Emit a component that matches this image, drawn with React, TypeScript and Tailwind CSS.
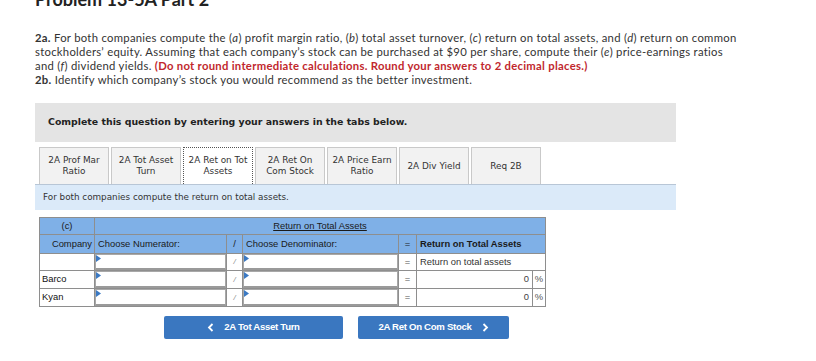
import React from 'react';

const tabs = [
  ['2A Prof Mar', 'Ratio'],
  ['2A Tot Asset', 'Turn'],
  ['2A Ret on Tot', 'Assets'],
  ['2A Ret On', 'Com Stock'],
  ['2A Price Earn', 'Ratio'],
  ['2A Div Yield'],
  ['Req 2B'],
];

const Marker: React.FC = () => (
  <svg width="5" height="7" viewBox="0 0 5 7" className="absolute left-[1px] top-[1px]">
    <path d="M0 0 L5 3.5 L0 7 Z" fill="#3b79c3" />
  </svg>
);

const InputCell: React.FC<{ tall?: boolean }> = ({ tall }) => (
  <td className="border border-[#8e8e8e] p-0 relative">
    <div className={(tall ? 'h-[17px]' : 'h-[16px]') + ' border border-[#a8a8a8] border-b-2 border-b-[#9a9a9a] bg-white'} />
    <Marker />
  </td>
);

const rows = [
  { name: '', result: 'Return on total assets' },
  { name: 'Barco', result: '0' },
  { name: 'Kyan', result: '0' },
];

const App: React.FC = () => {
  const cell = 'border border-[#8e8e8e]';
  return (
    <div className="w-[816px] h-[361px] overflow-hidden bg-white pl-[35px] text-[#333]">
      <div className="h-[10px] overflow-hidden">
        <div className="-mt-[12px] font-['Lato',sans-serif] font-bold text-[18px] leading-[22px] text-[#222]">
          Problem 13-5A Part 2
        </div>
      </div>

      <p className="mt-[21px] whitespace-nowrap font-['Lato',sans-serif] text-[11.3px] leading-[14px] tracking-[0.28px] text-[#333]">
        <b>2a.</b> For both companies compute the (<i>a</i>) profit margin ratio, (<i>b</i>) total asset turnover, (<i>c</i>) return on total assets, and (<i>d</i>) return on common
        <br />
        stockholders’ equity. Assuming that each company’s stock can be purchased at $90 per share, compute their (<i>e</i>) price-earnings ratios
        <br />
        and (<i>f</i>) dividend yields.{' '}
        <b className="text-[#c1272d]">(Do not round intermediate calculations. Round your answers to 2 decimal places.)</b>
        <br />
        <b>2b.</b> Identify which company’s stock you would recommend as the better investment.
      </p>

      <div className="mt-[16px] w-[641px] h-[39px] bg-[#e4e4e4] flex items-center pl-[13px] font-['DejaVu_Sans',sans-serif] font-bold text-[9.4px] text-[#222]">
        Complete this question by entering your answers in the tabs below.
      </div>

      <div className="mt-[5px] pl-[4px] flex gap-[2px] h-[37px] font-['DejaVu_Sans',sans-serif] text-[8.9px] leading-[11px] text-[#333]">
        {tabs.map((t, i) => (
          <div
            key={i}
            className={
              'w-[70px] flex flex-col items-center justify-center text-center ' +
              (i === 2
                ? 'bg-white border border-dotted border-[#555] border-b-0'
                : 'bg-[#f2f2f2] border border-[#c9c9c9] border-b-0')
            }
          >
            {t.map((l, j) => (
              <span key={j}>{l}</span>
            ))}
          </div>
        ))}
      </div>

      <div className="w-[641px] h-[26px] bg-[#dbeaf9] border-t border-[#b8c6d6] flex items-center pl-[8px] font-['DejaVu_Sans',sans-serif] text-[8.8px] text-[#333]">
        For both companies compute the return on total assets.
      </div>

      <table className="mt-[7px] ml-[4px] table-fixed border-collapse border border-[#8e8e8e] font-['Liberation_Sans',sans-serif] text-[9.4px] text-[#1a1a1a]">
        <colgroup>
          <col className="w-[55px]" />
          <col className="w-[132px]" />
          <col className="w-[16px]" />
          <col className="w-[156px]" />
          <col className="w-[18px]" />
          <col className="w-[116px]" />
          <col className="w-[13px]" />
        </colgroup>
        <tbody>
          <tr className="h-[17px] bg-[#7fb0e7]">
            <td className={cell + ' text-center'}>(c)</td>
            <td colSpan={6} className={cell + ' text-center underline'}>
              Return on Total Assets
            </td>
          </tr>
          <tr className="h-[19px] bg-[#7fb0e7]">
            <td className={cell + ' text-right pr-[2px]'}>Company</td>
            <td className={cell + ' pl-[3px]'}>Choose Numerator:</td>
            <td className={cell + ' text-center'}>/</td>
            <td className={cell + ' pl-[3px]'}>Choose Denominator:</td>
            <td className={cell + ' text-center'}>=</td>
            <td colSpan={2} className={cell + ' pl-[3px] font-bold'}>
              Return on Total Assets
            </td>
          </tr>
          {rows.map((r, i) => (
            <tr key={i}>
              <td className={cell + ' pl-[2px] text-[#111]'}>{r.name}</td>
              <InputCell tall={i > 0} />
              <td className={cell + ' text-center text-[#888] italic text-[8px]'}>/</td>
              <InputCell tall={i > 0} />
              <td className={cell + ' text-center text-[#555]'}>=</td>
              {i === 0 ? (
                <td colSpan={2} className={cell + ' pl-[3px] text-[#333]'}>
                  {r.result}
                </td>
              ) : (
                <>
                  <td className={cell + ' text-right pr-[3px] text-[#444]'}>{r.result}</td>
                  <td className={cell + ' text-center text-[#555]'}>%</td>
                </>
              )}
            </tr>
          ))}
        </tbody>
      </table>

      <div className="mt-[9px] flex gap-[15px] pl-[129px] font-['Liberation_Sans',sans-serif] font-bold text-[9.6px] text-white tracking-[-0.3px]">
        <button className="w-[179px] h-[23px] bg-[#3a77c0] rounded-[2px] flex items-center justify-center gap-[10px]">
          <svg width="7" height="9" viewBox="0 0 7 9">
            <path d="M5.5 1 L2 4.5 L5.5 8" stroke="white" strokeWidth="1.8" fill="none" />
          </svg>
          2A Tot Asset Turn
        </button>
        <button className="w-[151px] h-[23px] bg-[#3a77c0] rounded-[2px] flex items-center justify-center gap-[10px]">
          2A Ret On Com Stock
          <svg width="7" height="9" viewBox="0 0 7 9">
            <path d="M1.5 1 L5 4.5 L1.5 8" stroke="white" strokeWidth="1.8" fill="none" />
          </svg>
        </button>
      </div>
    </div>
  );
};

export default App;
